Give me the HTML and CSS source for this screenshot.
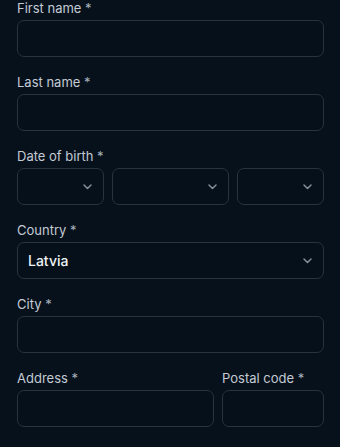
FILE: index.html
```html
<!DOCTYPE html>
<html lang="en">
<head>
    <meta charset="UTF-8">
    <meta name="viewport" content="width=device-width, initial-scale=1.0">
    <title>Personal details</title>
    <link rel="stylesheet" href="styles.css">
</head>
<body>

<form class="details-form">
    <div class="field">
        <label class="field-label">First name <span class="req">*</span></label>
        <div class="field-box"></div>
    </div>
    <div class="field">
        <label class="field-label">Last name <span class="req">*</span></label>
        <div class="field-box"></div>
    </div>
    <div class="field">
        <label class="field-label">Date of birth <span class="req">*</span></label>
        <div class="dob-row">
            <div class="field-box select">
                <svg class="chevron" width="9" height="6" viewBox="0 0 9 6"><path d="M1 1l3.5 3.5L8 1" fill="none" stroke="currentColor" stroke-width="1.5" stroke-linecap="round" stroke-linejoin="round"/></svg>
            </div>
            <div class="field-box select">
                <svg class="chevron" width="9" height="6" viewBox="0 0 9 6"><path d="M1 1l3.5 3.5L8 1" fill="none" stroke="currentColor" stroke-width="1.5" stroke-linecap="round" stroke-linejoin="round"/></svg>
            </div>
            <div class="field-box select">
                <svg class="chevron" width="9" height="6" viewBox="0 0 9 6"><path d="M1 1l3.5 3.5L8 1" fill="none" stroke="currentColor" stroke-width="1.5" stroke-linecap="round" stroke-linejoin="round"/></svg>
            </div>
        </div>
    </div>
    <div class="field">
        <label class="field-label">Country <span class="req">*</span></label>
        <div class="field-box select">
            <span class="field-value">Latvia</span>
            <svg class="chevron" width="9" height="6" viewBox="0 0 9 6"><path d="M1 1l3.5 3.5L8 1" fill="none" stroke="currentColor" stroke-width="1.5" stroke-linecap="round" stroke-linejoin="round"/></svg>
        </div>
    </div>
    <div class="field">
        <label class="field-label">City <span class="req">*</span></label>
        <div class="field-box"></div>
    </div>
    <div class="address-row">
        <div class="field">
            <label class="field-label">Address <span class="req">*</span></label>
            <div class="field-box"></div>
        </div>
        <div class="field">
            <label class="field-label">Postal code <span class="req">*</span></label>
            <div class="field-box"></div>
        </div>
    </div>
    <div class="field">
        <label class="field-label faint">Phone number *</label>
        <div class="field-box"></div>
    </div>
</form>

</body>
</html>
```

FILE: styles.css
```css
body {
    margin: 0;
    padding: 0;
    background-color: #07111c;
    font-family: Inter, "Noto Sans", sans-serif;
    overflow: hidden;
}
.details-form {
    padding: 0 16px 0 17px;
}
.field {
    margin-bottom: 17px;
}
.field-label {
    display: block;
    font-size: 13px;
    line-height: 16px;
    margin-bottom: 4px;
    color: #c3cbd4;
}
.field-label .req {
    color: #a9b2bc;
}
.field-label.faint {
    color: #3e4853;
}
.field-box {
    box-sizing: border-box;
    height: 37px;
    border: 1px solid #29333e;
    border-radius: 7px;
    background-color: #06101a;
}
.field-box.select {
    display: flex;
    align-items: center;
    justify-content: flex-end;
    padding: 0 11px 0 10px;
}
.field-value {
    flex: 1;
    font-size: 14px;
    font-weight: 500;
    color: #eef2f6;
}
.chevron {
    color: #838d98;
}
.dob-row {
    display: grid;
    grid-template-columns: 3fr 4fr 3fr;
    gap: 8px;
}
.address-row {
    display: grid;
    grid-template-columns: 1fr 102px;
    gap: 8px;
}
```
